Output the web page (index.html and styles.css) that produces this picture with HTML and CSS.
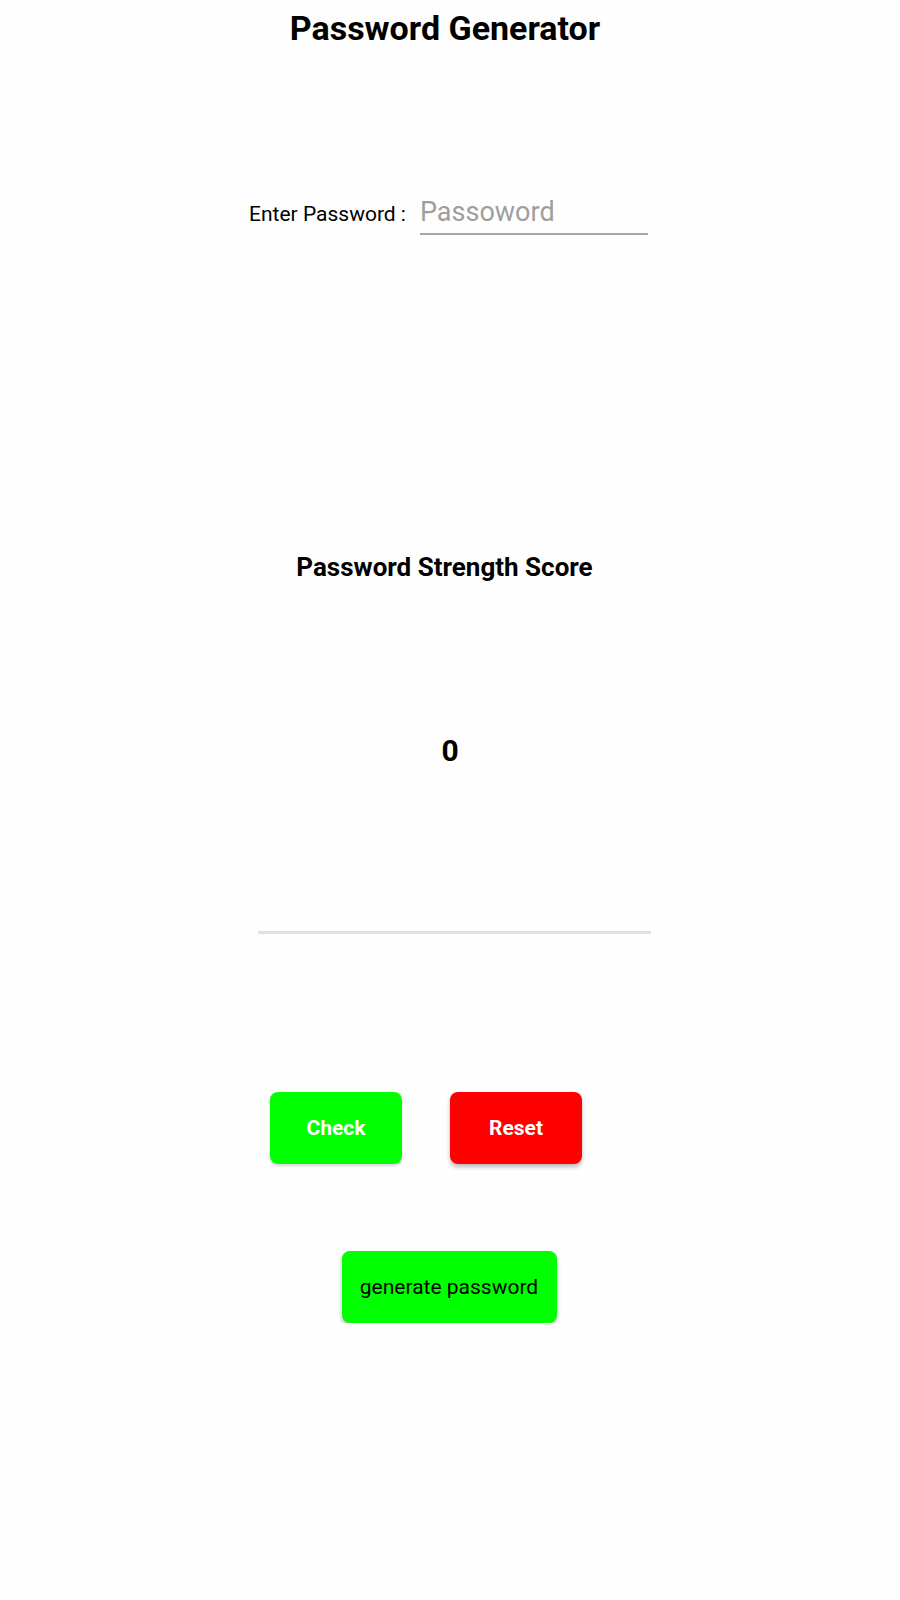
FILE: index.html
```html
<!DOCTYPE html>
<html lang="en">
<head>
<meta charset="utf-8">
<title>Password Generator</title>
<link rel="stylesheet" href="styles.css">
</head>
<body>
<main class="app">
  <h1 class="title">Password Generator</h1>
  <div class="entry">
    <label class="entry-label" for="pw">Enter Password :</label>
    <input class="entry-input" id="pw" type="text" placeholder="Passoword">
  </div>
  <h2 class="score-heading">Password Strength Score</h2>
  <div class="score-value">0</div>
  <div class="meter"><div class="meter-fill" style="width:0%"></div></div>
  <div class="actions">
    <button class="btn btn-check">Check</button>
    <button class="btn btn-reset">Reset</button>
  </div>
  <button class="btn btn-generate">generate password</button>
</main>
</body>
</html>
```

FILE: styles.css
```css
html, body {
  margin: 0;
  padding: 0;
  background: #fefefe;
}

body {
  font-family: Roboto, "Noto Sans", Arial, sans-serif;
  color: #000;
}

.app {
  width: 900px;
  display: flex;
  flex-direction: column;
  align-items: center;
}

.title {
  margin: 8px 10px 0 0;
  font-size: 34px;
  line-height: 40px;
  font-weight: 700;
}

.entry {
  margin: 149px 3px 0 0;
  display: flex;
  align-items: baseline;
  gap: 14px;
}

.entry-label {
  font-size: 21px;
  line-height: 24px;
}

.entry-input {
  box-sizing: content-box;
  width: 228px;
  height: 30px;
  padding: 0 0 6px 0;
  margin: 0;
  border: none;
  border-bottom: 2px solid #a6a6a6;
  outline: none;
  background: transparent;
  font-family: inherit;
  font-size: 27px;
  color: #000;
}

.entry-input::placeholder {
  color: #9e9e9e;
}

.score-heading {
  margin: 316px 11px 0 0;
  font-size: 26px;
  line-height: 32px;
  font-weight: 700;
}

.score-value {
  margin-top: 150px;
  font-size: 30px;
  line-height: 36px;
  font-weight: 700;
}

.meter {
  margin: 162px 0 0 9px;
  width: 393px;
  height: 3px;
  background: #e0e0e0;
}

.meter-fill {
  height: 100%;
  background: #00ff00;
}

.actions {
  margin: 158px 48px 0 0;
  display: flex;
  gap: 48px;
}

.btn {
  box-sizing: border-box;
  height: 72px;
  border: none;
  border-radius: 8px;
  font-family: inherit;
  font-size: 21px;
  cursor: pointer;
  box-shadow: 0 3px 4px rgba(0, 0, 0, 0.28);
}

.btn-check,
.btn-reset {
  width: 132px;
  font-weight: 700;
  color: #fff;
}

.btn-check {
  background: #00ff00;
  box-shadow: 0 2px 3px rgba(0, 0, 0, 0.16);
}

.btn-reset {
  background: #ff0000;
}

.btn-generate {
  margin: 87px 2px 0 0;
  width: 215px;
  background: #00ff00;
  color: #000;
  font-weight: 400;
}
```
